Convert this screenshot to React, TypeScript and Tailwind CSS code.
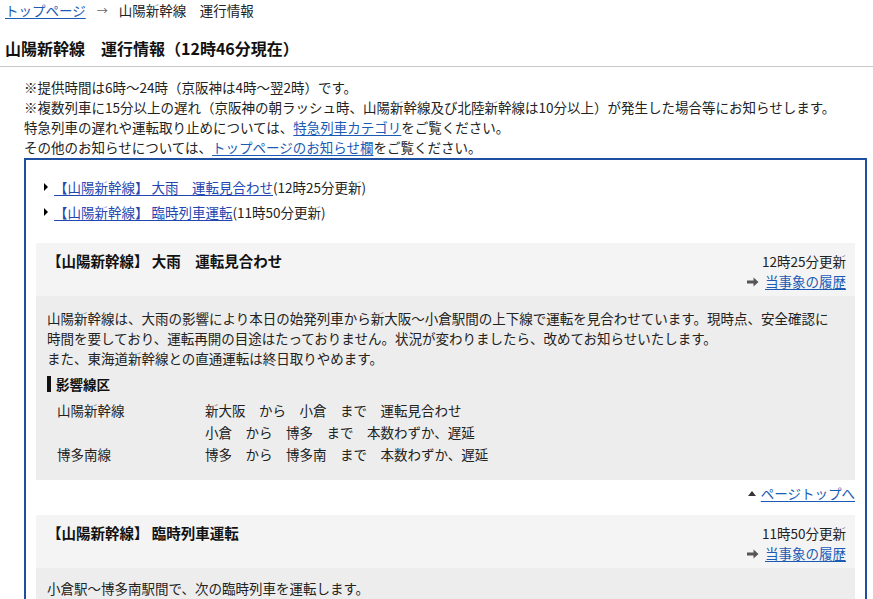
import React from 'react';

const FONT = { fontFamily: '"Noto Sans CJK JP", "Noto Sans", sans-serif' };

function HistoryLink() {
  return (
    <div className="flex items-center justify-end gap-[6px] leading-[20px]">
      <svg width="12" height="10" viewBox="0 0 12 10" className="mt-[1px]">
        <path d="M0 3.5h6.5V0.5L11.5 5l-5 4.5v-3H0z" fill="#555" />
      </svg>
      <a href="#" className="text-[#1a5cb5] underline underline-offset-2">当事象の履歴</a>
    </div>
  );
}

function CardHeader({ title, time }: { title: string; time: string }) {
  return (
    <div className="flex justify-between bg-[#f4f4f4] pl-[11px] pr-[9px] pt-[8px] pb-[5px]">
      <h3 className="text-[14.5px] font-bold leading-[20px] text-[#111]">{title}</h3>
      <div className="text-right">
        <div className="leading-[20px]">{time}</div>
        <HistoryLink />
      </div>
    </div>
  );
}

export default function App() {
  return (
    <div className="min-h-[599px] bg-white text-[13.5px] text-[#222]" style={FONT}>
      {/* Breadcrumb */}
      <div className="flex items-center px-[5px] leading-[20px]">
        <a href="#" className="text-[#1a5cb5] underline underline-offset-2">トップページ</a>
        <span className="mx-[11px] text-[11px] text-[#666]">→</span>
        <span>山陽新幹線　運行情報</span>
      </div>

      {/* Heading */}
      <h1 className="mt-[16px] border-b border-[#c8c8c8] px-[5px] pb-[6px] text-[16px] font-bold leading-[24px] text-[#111]">
        山陽新幹線　運行情報（12時46分現在）
      </h1>

      {/* Notes */}
      <div className="mt-[10px] pl-[24px] leading-[20px]">
        <p>※提供時間は6時～24時（京阪神は4時～翌2時）です。</p>
        <p>※複数列車に15分以上の遅れ（京阪神の朝ラッシュ時、山陽新幹線及び北陸新幹線は10分以上）が発生した場合等にお知らせします。</p>
        <p>
          特急列車の遅れや運転取り止めについては、
          <a href="#" className="text-[#1a5cb5] underline underline-offset-2">特急列車カテゴリ</a>
          をご覧ください。
        </p>
        <p>
          その他のお知らせについては、
          <a href="#" className="text-[#1a5cb5] underline underline-offset-2">トップページのお知らせ欄</a>
          をご覧ください。
        </p>
      </div>

      {/* Info box */}
      <div className="ml-[24px] mr-[6px] mt-[1px] border-2 border-[#1f4f9f] px-[10px] pt-[17px] pb-[20px]">
        <ul className="flex flex-col gap-[5px] pl-[8px]">
          {[
            ['【山陽新幹線】 大雨　運転見合わせ', '(12時25分更新)'],
            ['【山陽新幹線】 臨時列車運転', '(11時50分更新)'],
          ].map(([t, u]) => (
            <li key={t} className="flex items-center leading-[20px]">
              <span className="mr-[6px] h-0 w-0 border-y-[4px] border-l-[4px] border-y-transparent border-l-black" />
              <a href="#" className="text-[#2446b0] underline underline-offset-2">{t}</a>
              <span>{u}</span>
            </li>
          ))}
        </ul>

        {/* Card 1 */}
        <div className="mt-[21px]">
          <CardHeader title="【山陽新幹線】 大雨　運転見合わせ" time="12時25分更新" />
          <div className="bg-[#ededed] px-[11px] pt-[12px] pb-[15px] leading-[20px]">
            <p>
              山陽新幹線は、大雨の影響により本日の始発列車から新大阪～小倉駅間の上下線で運転を見合わせています。現時点、安全確認に
              <br />
              時間を要しており、運転再開の目途はたっておりません。状況が変わりましたら、改めてお知らせいたします。
            </p>
            <p>また、東海道新幹線との直通運転は終日取りやめます。</p>
            <div className="mt-[6px] flex items-center gap-[5px]">
              <span className="h-[16px] w-[4px] bg-[#111]" />
              <span className="font-bold text-[#111]">影響線区</span>
            </div>
            <div className="mt-[5px] grid grid-cols-[148px_1fr] pl-[10px] leading-[22px]">
              <span>山陽新幹線</span>
              <span className="whitespace-pre">新大阪　から　小倉　まで　運転見合わせ</span>
              <span />
              <span className="whitespace-pre">小倉　から　博多　まで　本数わずか、遅延</span>
              <span>博多南線</span>
              <span className="whitespace-pre">博多　から　博多南　まで　本数わずか、遅延</span>
            </div>
          </div>
        </div>

        <div className="mt-[3px] flex items-center justify-end gap-[5px] leading-[20px]">
          <span className="h-0 w-0 border-x-[4px] border-b-[5px] border-x-transparent border-b-[#333]" />
          <a href="#" className="text-[#1a5cb5] underline underline-offset-2">ページトップへ</a>
        </div>

        {/* Card 2 */}
        <div className="mt-[12px]">
          <CardHeader title="【山陽新幹線】 臨時列車運転" time="11時50分更新" />
          <div className="bg-[#ededed] px-[11px] pt-[10px] pb-[15px] leading-[20px]">
            <p>小倉駅～博多南駅間で、次の臨時列車を運転します。</p>
          </div>
        </div>
      </div>
    </div>
  );
}
